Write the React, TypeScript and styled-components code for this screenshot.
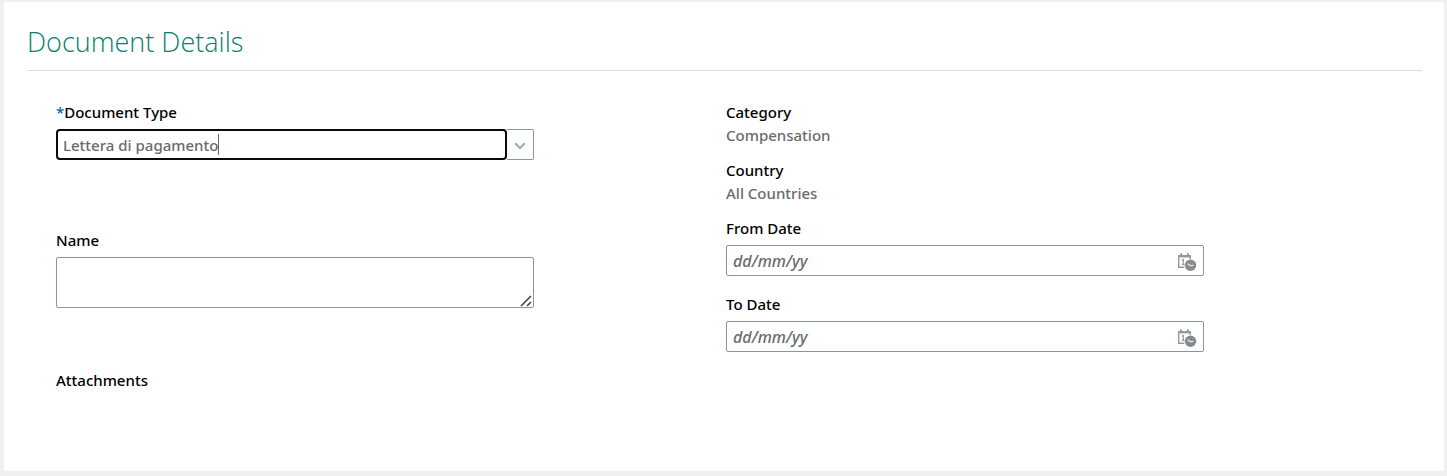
import React from 'react';
import styled, { createGlobalStyle, css } from 'styled-components';

const GlobalStyle = createGlobalStyle`
  *, *::before, *::after { box-sizing: border-box; }
  body {
    margin: 0;
    background: #f0f0f0;
    color: #000;
    font-family: "Segoe UI", "Noto Sans", "Open Sans", sans-serif;
    font-size: 15px;
    line-height: 20px;
  }
`;

const Panel = styled.main`
  margin: 2px 3px 5px 4px;
  padding: 20px 22px 81px 23px;
  background: #fff;
  border-radius: 2px;
`;

const Title = styled.h1`
  margin: 0;
  padding-bottom: 8px;
  border-bottom: 1px solid #d6dfe6;
  color: #0a8073;
  font-family: "Segoe UI", "Open Sans", sans-serif;
  font-size: 27px;
  font-weight: 300;
  line-height: 40px;
`;

const Form = styled.form`
  display: grid;
  grid-template-columns: 1fr 1fr;
  padding: 31px 26px 0 29px;
`;

const Column = styled.div`
  display: flex;
  flex-direction: column;
  align-items: flex-start;
`;

const Field = styled.div<{ $gap: number }>`
  display: flex;
  flex-direction: column;
  width: 100%;
  max-width: 478px;
  margin-bottom: ${(p) => p.$gap}px;
`;

const labelText = css`
  font-weight: 500;
  line-height: 20px;
`;

const Label = styled.label`
  ${labelText}
`;

const Caption = styled.div`
  ${labelText}
`;

const Required = styled.span`
  color: #0567b8;
`;

const Value = styled.div`
  padding-top: 2px;
  color: #6b6b6b;
  font-weight: 500;
  line-height: 22px;
`;

const Combo = styled.div`
  display: flex;
  height: 31px;
  margin-top: 7px;
`;

const FocusBox = styled.div`
  display: flex;
  flex: 1;
  align-items: center;
  overflow: hidden;
  padding: 0 5px;
  border: 2px solid #0a0a0a;
  border-radius: 4px;
`;

const ComboInput = styled.input`
  field-sizing: content;
  padding: 0;
  border: 0;
  outline: 0;
  background: transparent;
  color: #6b6b6b;
  caret-color: transparent;
  font: inherit;
  font-weight: 500;
`;

const Caret = styled.span`
  width: 1px;
  height: 21px;
  background: #666;
`;

const DropButton = styled.button`
  display: flex;
  align-items: center;
  justify-content: center;
  width: 27px;
  padding: 2px 0 0;
  border: 1px solid #8797a0;
  border-left: 0;
  border-radius: 0 2px 2px 0;
  background: #fcfdfe;
`;

const boxed = css`
  width: 100%;
  border: 1px solid #8797a0;
  border-radius: 2px;
  background: #fff;
`;

const DateBox = styled.div`
  ${boxed}
  display: flex;
  align-items: center;
  height: 31px;
  margin-top: 7px;
  padding: 0 6px;
`;

const DateInput = styled.input`
  flex: 1;
  min-width: 0;
  padding: 0;
  border: 0;
  outline: 0;
  background: transparent;
  font: inherit;
  font-size: 16px;
  &::placeholder {
    color: #6b6b6b;
    font-style: italic;
    font-weight: 500;
    opacity: 1;
  }
`;

const IconButton = styled.button`
  display: flex;
  padding: 2px 0 0;
  border: 0;
  background: transparent;
`;

const NameBox = styled.div`
  position: relative;
  display: flex;
  margin-top: 7px;
`;

const NameArea = styled.textarea`
  ${boxed}
  height: 51px;
  padding: 4px 6px;
  font: inherit;
  resize: none;
`;

const Grip = styled.svg`
  position: absolute;
  right: 2px;
  bottom: 1px;
  pointer-events: none;
`;

function CalendarClock() {
  return (
    <svg width="20" height="20" viewBox="0 0 20 20" aria-hidden="true">
      <path d="M1.7 3.7v11.6h5.6M13.3 4v3" fill="none" stroke="#96999b" strokeWidth="1.4" />
      <path d="M1 3h13v2.4H1z" fill="#96999b" />
      <path d="M3.2 1.2h1.9v3H3.2zM9.9 1.2h1.9v3H9.9z" fill="#96999b" />
      <path d="M4.7 8.3l1.6-.8v5M4.8 12.4h2.6" fill="none" stroke="#96999b" strokeWidth="1.2" />
      <circle cx="13.5" cy="13.3" r="5.7" fill="#878b8e" />
      <path d="M10.6 11.8l2.8 2 3-.4" fill="none" stroke="#f2f2f2" strokeWidth="1.1" />
    </svg>
  );
}

function DateField({ id, label, gap }: { id: string; label: string; gap: number }) {
  return (
    <Field $gap={gap}>
      <Label htmlFor={id}>{label}</Label>
      <DateBox>
        <DateInput id={id} type="text" placeholder="dd/mm/yy" />
        <IconButton type="button" aria-label={`Select ${label}`}>
          <CalendarClock />
        </IconButton>
      </DateBox>
    </Field>
  );
}

export default function App() {
  return (
    <>
      <GlobalStyle />
      <Panel>
        <Title>Document Details</Title>
        <Form>
          <Column>
            <Field $gap={70}>
              <Label htmlFor="document-type">
                <Required>*</Required>Document Type
              </Label>
              <Combo>
                <FocusBox>
                  <ComboInput id="document-type" type="text" defaultValue="Lettera di pagamento" />
                  <Caret />
                </FocusBox>
                <DropButton type="button" aria-label="Show document types">
                  <svg width="12" height="8" viewBox="0 0 12 8" aria-hidden="true">
                    <path d="M1.2 1.2L6 6l4.8-4.8" fill="none" stroke="#a8aaab" strokeWidth="2" />
                  </svg>
                </DropButton>
              </Combo>
            </Field>
            <Field $gap={62}>
              <Label htmlFor="name">Name</Label>
              <NameBox>
                <NameArea id="name" />
                <Grip width="12" height="12" viewBox="0 0 12 12" aria-hidden="true">
                  <path d="M1 11L11 1M7 11l4-4" fill="none" stroke="#4a4a4a" strokeWidth="1.7" />
                </Grip>
              </NameBox>
            </Field>
            <Caption>Attachments</Caption>
          </Column>
          <Column>
            <Field $gap={14}>
              <Caption>Category</Caption>
              <Value>Compensation</Value>
            </Field>
            <Field $gap={14}>
              <Caption>Country</Caption>
              <Value>All Countries</Value>
            </Field>
            <DateField id="from-date" label="From Date" gap={18} />
            <DateField id="to-date" label="To Date" gap={0} />
          </Column>
        </Form>
      </Panel>
    </>
  );
}
